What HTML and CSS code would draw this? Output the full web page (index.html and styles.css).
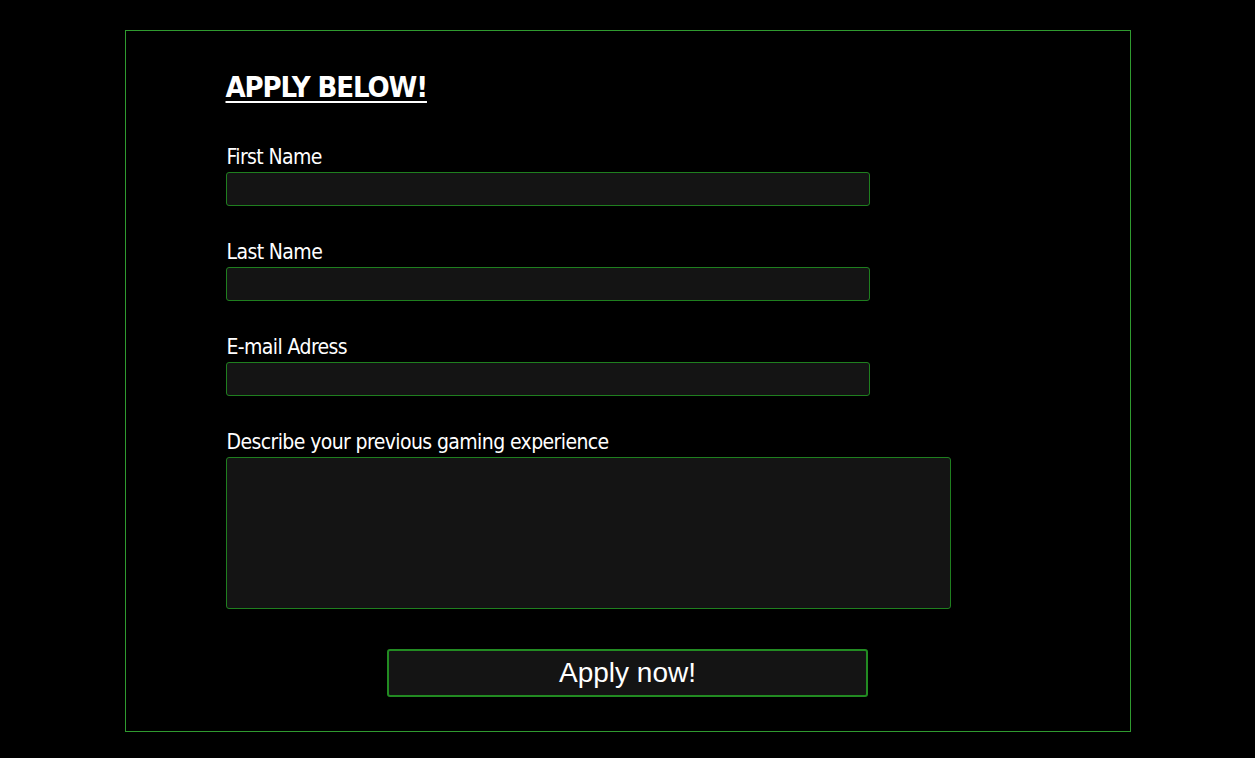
FILE: index.html
```html
<!DOCTYPE html>
<html lang="en">
<head>
<meta charset="utf-8">
<title>Apply</title>
<link rel="stylesheet" href="styles.css">
</head>
<body>
<main class="panel">
  <form class="apply-form">
    <h1 class="title">APPLY BELOW!</h1>
    <div class="field">
      <label class="label" for="fn">First Name</label>
      <input class="input" id="fn" type="text">
    </div>
    <div class="field">
      <label class="label" for="ln">Last Name</label>
      <input class="input" id="ln" type="text">
    </div>
    <div class="field">
      <label class="label" for="em">E-mail Adress</label>
      <input class="input" id="em" type="email">
    </div>
    <div class="field">
      <label class="label" for="ex">Describe your previous gaming experience</label>
      <textarea class="textarea" id="ex"></textarea>
    </div>
    <div class="actions">
      <button class="submit" type="button">Apply now!</button>
    </div>
  </form>
</main>
</body>
</html>
```

FILE: styles.css
```css
html, body {
  margin: 0;
  padding: 0;
  background: #000;
  color: #fff;
}
body {
  padding-top: 30px;
  font-family: "DejaVu Sans Condensed", "Liberation Sans", sans-serif;
}
.panel {
  width: 80%;
  margin: 0 auto;
  border: 1px solid #2f9a2f;
  box-sizing: content-box;
  height: 700px;
}
.apply-form {
  padding: 38px 100px 0 100px;
  display: flex;
  flex-direction: column;
}
.title {
  margin: 0 0 38px 0;
  font-size: 29px;
  font-weight: 700;
  text-decoration: underline;
  text-decoration-thickness: 2px;
  text-underline-offset: 4px;
  line-height: 36px;
  letter-spacing: -1.1px;
}
.field {
  display: flex;
  flex-direction: column;
  align-items: flex-start;
  margin-bottom: 32px;
}
.label {
  font-size: 21px;
  line-height: 29px;
  height: 29px;
  letter-spacing: -0.6px;
  padding-left: 1px;
}
.input, .textarea {
  box-sizing: border-box;
  background: #141414;
  border: 1px solid #1f7f1f;
  border-radius: 3px;
  color: #fff;
  margin: 0;
}
.input {
  width: 644px;
  height: 34px;
}
.textarea {
  width: 725px;
  height: 152px;
  resize: none;
}
.actions {
  display: flex;
  justify-content: center;
  margin-top: 8px;
}
.submit {
  width: 481px;
  height: 48px;
  box-sizing: border-box;
  background: #141414;
  border: 2px solid #228b22;
  border-radius: 3px;
  color: #fff;
  font-family: "Liberation Sans", Arial, sans-serif;
  font-size: 28px;
}
```
